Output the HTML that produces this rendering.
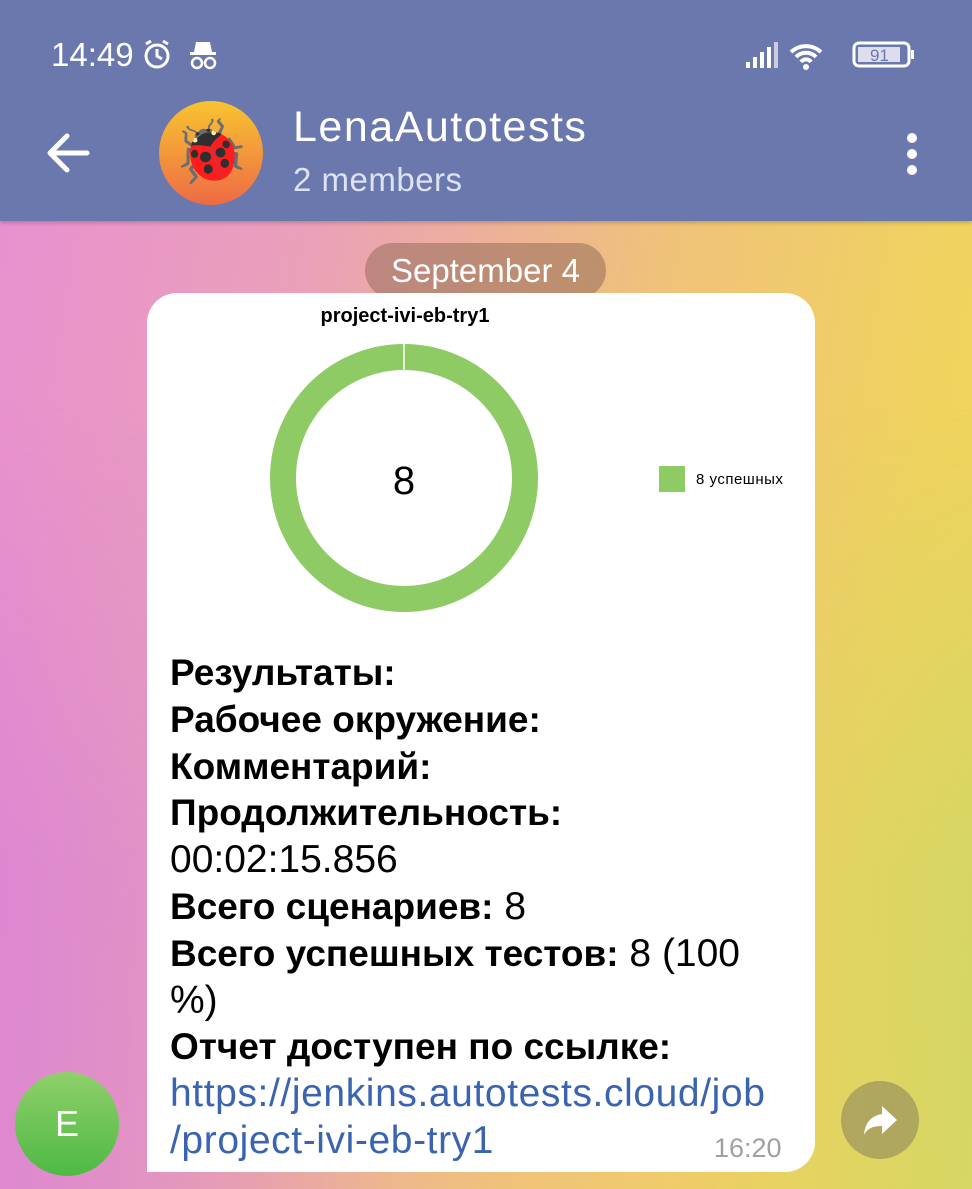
<!DOCTYPE html>
<html><head><meta charset="utf-8"><style>
*{margin:0;padding:0;box-sizing:border-box}
body{width:972px;height:1189px;overflow:hidden;position:relative;font-family:"Liberation Sans","Noto Sans CJK SC",sans-serif;
background:linear-gradient(100deg,#e88fd3 0%,#eaa0b8 30%,#efc27a 60%,#f0d35e 85%,#eed65a 100%);}
.bl{position:absolute;left:0;top:400px;width:972px;height:789px;background:linear-gradient(90deg,rgba(210,120,220,.5),rgba(0,0,0,0) 40%,rgba(0,0,0,0) 70%,rgba(190,215,110,.5));-webkit-mask-image:linear-gradient(180deg,transparent,#000 60%);mask-image:linear-gradient(180deg,transparent,#000 60%)}
.hdr{position:absolute;left:0;top:0;width:972px;height:221px;background:#6a78ae;color:#fff;box-shadow:0 2px 4px rgba(0,0,0,.2)}
.t{position:absolute;white-space:nowrap}
.bub{position:absolute;left:147px;top:293px;width:668px;height:879px;background:#fff;border-radius:30px 30px 30px 0}
.msg{position:absolute;left:170px;top:650px;font-size:39px;line-height:46.8px;color:#000;width:640px;white-space:nowrap}
.msg b{font-weight:bold;font-size:37px}
a{color:#3a64b0;text-decoration:none;letter-spacing:0.6px}
</style></head><body>
<div class="bl"></div>
<div class="hdr">
<div class="t" style="left:51px;top:36px;font-size:33px">14:49</div>
<svg class="t" style="left:140px;top:38px" width="80" height="34"><circle cx="17" cy="18" r="11" fill="none" stroke="#fff" stroke-width="3"/><path d="M17 11v7l5 3M6 6l5-3M28 6l-5-3" stroke="#fff" stroke-width="3" fill="none"/><path d="M56 4h14l2 10h-18z" fill="#fff"/><rect x="50" y="14" width="26" height="3" fill="#fff"/><circle cx="57" cy="25" r="5" fill="none" stroke="#fff" stroke-width="2.5"/><circle cx="70" cy="25" r="5" fill="none" stroke="#fff" stroke-width="2.5"/></svg>
<svg class="t" style="left:744px;top:38px" width="175" height="34"><rect x="2" y="24" width="4" height="6" fill="#fff"/><rect x="9" y="19" width="4" height="11" fill="#fff"/><rect x="16" y="14" width="4" height="16" fill="#fff"/><rect x="23" y="9" width="4" height="21" fill="#fff"/><rect x="30" y="4" width="4" height="26" fill="#ccd"/><path d="M47 14a22 22 0 0 1 30 0M52 19a14 14 0 0 1 20 0M57 24a6 6 0 0 1 10 0" stroke="#fff" stroke-width="4" fill="none"/><circle cx="62" cy="29" r="3" fill="#fff"/><rect x="110" y="5" width="55" height="23" rx="5" fill="none" stroke="#fff" stroke-width="3"/><rect x="114" y="9" width="42" height="15" fill="#dde"/><rect x="167" y="12" width="3" height="9" fill="#fff"/><text x="126" y="23" font-size="17" fill="#6a78ae" font-family="Liberation Sans">91</text></svg>
<svg class="t" style="left:45px;top:132px" width="46" height="42"><path d="M42 21H6M22 4L5 21l17 17" stroke="#fff" stroke-width="5" fill="none" stroke-linecap="round" stroke-linejoin="round"/></svg>
<div class="t" style="left:159px;top:101px;width:104px;height:104px;border-radius:50%;background:linear-gradient(#f8c531,#ee6a45);font-size:62px;text-align:center;line-height:104px">🐞</div>
<div class="t" style="left:293px;top:103px;font-size:43px;letter-spacing:1.5px">LenaAutotests</div>
<div class="t" style="left:293px;top:161px;font-size:33px;color:#dde2f2;letter-spacing:.5px">2 members</div>
<svg class="t" style="left:900px;top:132px" width="24" height="44"><circle cx="12" cy="6" r="5" fill="#fff"/><circle cx="12" cy="22" r="5" fill="#fff"/><circle cx="12" cy="38" r="5" fill="#fff"/></svg>
</div>
<div class="t" style="left:365px;top:243px;width:241px;height:55px;border-radius:28px;background:rgba(150,110,90,.55);color:#fff;font-size:33px;text-align:center;line-height:55px">September 4</div>
<div class="bub"></div>
<div class="t" style="left:147px;top:305px;width:516px;text-align:center;font-size:20px;font-weight:bold">project-ivi-eb-try1</div>
<svg class="t" style="left:260px;top:334px" width="290" height="290"><circle cx="144" cy="144" r="121" fill="none" stroke="#8fcb64" stroke-width="26"/><line x1="144" y1="10" x2="144" y2="36" stroke="#fff" stroke-width="1.5"/><text x="144" y="160" text-anchor="middle" font-size="40" font-family="Liberation Sans">8</text></svg>
<div class="t" style="left:659px;top:466px;width:26px;height:26px;background:#8fcb64"></div>
<div class="t" style="left:696px;top:471px;font-size:15px;letter-spacing:.5px">8 успешных</div>
<div class="msg"><b>Результаты:</b><br><b>Рабочее окружение:</b><br><b>Комментарий:</b><br><b>Продолжительность:</b><br>00:02:15.856<br><b>Всего сценариев:</b> 8<br><b>Всего успешных тестов:</b> 8 (100<br>%)<br><b>Отчет доступен по ссылке:</b><br><a>https://jenkins.autotests.cloud/job<br>/project-ivi-eb-try1</a></div>
<div class="t" style="left:714px;top:1133px;font-size:27px;color:#a0a0a0">16:20</div>
<div class="t" style="left:15px;top:1072px;width:104px;height:104px;border-radius:50%;background:linear-gradient(#8fd06a,#4fb944);color:#fff;font-size:36px;text-align:center;line-height:104px">E</div>
<div class="t" style="left:841px;top:1081px;width:78px;height:78px;border-radius:50%;background:rgba(120,110,90,.45)"></div>
<svg class="t" style="left:862px;top:1104px" width="38" height="34"><path d="M20 2l15 14-15 14v-8C10 22 5 25 2 31 3 20 8 12 20 10z" fill="#fff"/></svg>
</body></html>
